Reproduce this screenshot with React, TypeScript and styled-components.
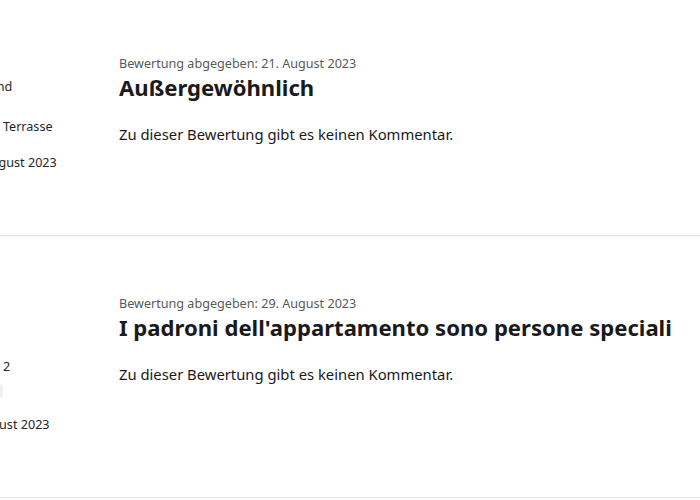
import { createGlobalStyle } from 'styled-components';
import styled from 'styled-components';

const GlobalStyle = createGlobalStyle`
  html, body {
    margin: 0;
    background: #fff;
    overflow: hidden;
  }
  body {
    font-family: "Noto Sans", "Open Sans", sans-serif;
    color: #1a1a1a;
  }
`;

const List = styled.div`
  margin-top: -4px;
`;

const Card = styled.article<{ $height: number }>`
  display: flex;
  gap: 26px;
  height: ${(p) => p.$height}px;
  box-sizing: border-box;
  border-bottom: 1px solid #e4e4e4;
  box-shadow: 0 2px 2px rgba(0, 0, 0, 0.03);
`;

// the reviewer column is scrolled mostly out of view on the left
const Sidebar = styled.aside`
  flex: 0 0 180px;
  margin-left: -87px;
  padding-top: 82px;
  display: flex;
  flex-direction: column;
`;

const SideItem = styled.div<{ $gap?: number }>`
  margin-top: ${(p) => p.$gap ?? 0}px;
  font-size: 12.6px;
  line-height: 18px;
  color: #262626;
  white-space: nowrap;
`;

const Flag = styled.span`
  display: inline-block;
  width: 16px;
  height: 11px;
  margin-right: 9px;
  vertical-align: -1px;
  background: linear-gradient(#000 0 33%, #d00 33% 66%, #ffce00 66%);
`;

const Tag = styled.span`
  align-self: flex-start;
  margin-top: 8px;
  padding: 1px 6px;
  border-radius: 3px;
  background: #f1f1f1;
  font-size: 10.4px;
  line-height: 12px;
  color: #595959;
  white-space: nowrap;
`;

const Content = styled.div`
  padding-top: 59px;
  flex: 1;
`;

const Meta = styled.div`
  font-size: 12.6px;
  line-height: 18px;
  color: #595959;
`;

const Title = styled.h3`
  margin: -2px 0 0;
  font-size: 22.1px;
  line-height: 32px;
  font-weight: 700;
  color: #1a1a1a;
  white-space: nowrap;
`;

const Comment = styled.p`
  margin: 21px 0 0;
  font-size: 14.8px;
  line-height: 20px;
  color: #1a1a1a;
`;

type Review = {
  date: string;
  title: string;
  country: string;
  room: string;
  tag?: string;
  stay: string;
  height: number;
};

const reviews: Review[] = [
  {
    date: '21. August 2023',
    title: 'Außergewöhnlich',
    country: 'Deutschland',
    room: 'Apartment mit Terrasse',
    stay: '12 Nächte · August 2023',
    height: 240,
  },
  {
    date: '29. August 2023',
    title: "I padroni dell'appartamento sono persone speciali",
    country: 'Italien',
    room: 'Apartment mit 2',
    tag: 'Familie mit Kind',
    stay: '2 Nächte · August 2023',
    height: 262,
  },
];

export default function App() {
  return (
    <>
      <GlobalStyle />
      <List>
        {reviews.map((r) => (
          <Card key={r.date} $height={r.height}>
            <Sidebar>
              <SideItem>
                <Flag />
                {r.country}
              </SideItem>
              <SideItem $gap={22}>{r.room}</SideItem>
              {r.tag && <Tag>{r.tag}</Tag>}
              <SideItem $gap={18}>{r.stay}</SideItem>
            </Sidebar>
            <Content>
              <Meta>Bewertung abgegeben: {r.date}</Meta>
              <Title>{r.title}</Title>
              <Comment>Zu dieser Bewertung gibt es keinen Kommentar.</Comment>
            </Content>
          </Card>
        ))}
      </List>
    </>
  );
}
